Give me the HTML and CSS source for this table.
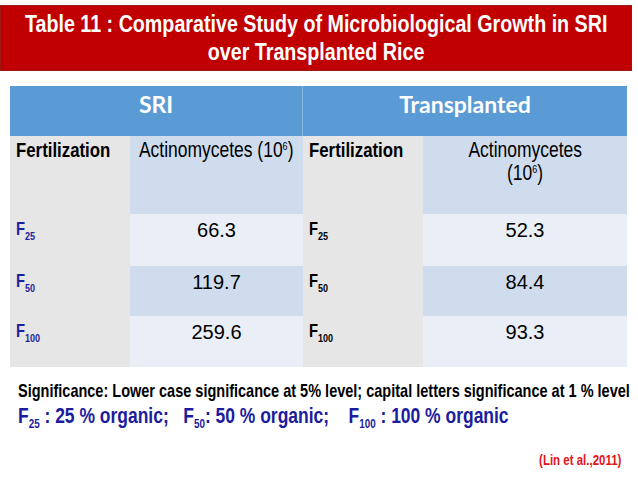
FILE: index.html
```html
<!DOCTYPE html>
<html>
<head>
<meta charset="utf-8">
<link rel="stylesheet" href="styles.css">
</head>
<body>
<div class="banner">
  <div class="title">
    <span class="n nc">Table 11 : Comparative Study of Microbiological Growth in SRI</span>
    <span class="n nc">over Transplanted Rice</span>
  </div>
</div>
<div class="table">
  <div class="hd hd-left">SRI</div>
  <div class="hd">Transplanted</div>

  <div class="c fert"><span class="n">Fertilization</span></div>
  <div class="c val sub"><span class="n nc">Actinomycetes (10<sup>6</sup>)</span></div>
  <div class="c fert"><span class="n">Fertilization</span></div>
  <div class="c val sub"><span class="n nc">Actinomycetes</span><span class="n nc">(10<sup>6</sup>)</span></div>

  <div class="c fert f blue"><span class="n">F<sub>25</sub></span></div>
  <div class="c val num light">66.3</div>
  <div class="c fert f"><span class="n">F<sub>25</sub></span></div>
  <div class="c val num light">52.3</div>

  <div class="c fert f blue"><span class="n">F<sub>50</sub></span></div>
  <div class="c val num dark">119.7</div>
  <div class="c fert f"><span class="n">F<sub>50</sub></span></div>
  <div class="c val num dark">84.4</div>

  <div class="c fert f blue"><span class="n">F<sub>100</sub></span></div>
  <div class="c val num light">259.6</div>
  <div class="c fert f"><span class="n">F<sub>100</sub></span></div>
  <div class="c val num light">93.3</div>
</div>
<div class="notes">
  <div class="sig"><span class="n">Significance: Lower case significance at 5% level; capital letters significance at 1 % level</span></div>
  <div class="legend"><span class="n">F<sub>25</sub> : 25 % organic;&nbsp;&nbsp; F<sub>50</sub>: 50 % organic;&nbsp;&nbsp;&nbsp; F<sub>100</sub> : 100 % organic</span></div>
  <div class="cite"><span class="n nr">(Lin et al.,2011)</span></div>
</div>
</body>
</html>
```

FILE: styles.css
```css
html, body {
  margin: 0;
  padding: 0;
  background: #ffffff;
}
html { overflow: hidden; }
body {
  width: 638px;
  height: 479px;
  overflow: hidden;
  font-family: "Liberation Sans", Arial, sans-serif;
}
/* Arial Narrow look: condensed Liberation Sans */
.n {
  display: inline-block;
  white-space: nowrap;
  transform: scaleX(0.82);
  transform-origin: left center;
}
.nc { transform-origin: center center; }
.nr { transform-origin: right center; }

.banner {
  margin-top: 5px;
  width: 630px;
  height: 64px;
  background: #c00000;
  border: 1px solid #9a1a10;
  display: flex;
  align-items: center;
  justify-content: center;
  overflow: hidden;
}
.title {
  width: 100%;
  display: flex;
  flex-direction: column;
  align-items: center;
  color: #ffffff;
  font-weight: bold;
  font-size: 24px;
  line-height: 28px;
}
.table {
  margin: 15px 0 0 10px;
  width: 617px;
  display: grid;
  grid-template-columns: 120px 173px 120px 204px;
  grid-template-rows: 50px 78px 52px 50px 51px;
}
.hd {
  grid-column: span 2;
  background: #5b9bd5;
  color: #ffffff;
  font-family: Lato, "Open Sans", sans-serif;
  font-weight: bold;
  font-size: 23px;
  text-align: center;
  padding-top: 4px;
}
.hd-left {
  border-right: 1px solid #86b6e2;
}
.c {
  font-size: 20.5px;
  line-height: 22px;
  color: #000000;
  padding-top: 3px;
  overflow: hidden;
  min-width: 0;
}
.fert {
  background: #e6e6e6;
  padding-left: 6px;
  font-weight: bold;
}
.val {
  display: flex;
  flex-direction: column;
  align-items: center;
}
.val.sub {
  font-size: 21.3px;
  line-height: 23px;
}
.num {
  font-size: 20px;
  line-height: 24px;
  padding-top: 4px;
}
.f {
  font-size: 18px;
  line-height: 24px;
}
.sub { background: #cfdcee; }
.light { background: #e9eef7; }
.dark { background: #cfdcee; }
.blue { color: #1f1fa0; }
sup {
  font-size: 11px;
  vertical-align: 7px;
  line-height: 0;
}
sub {
  font-size: 11px;
  vertical-align: -5px;
  line-height: 0;
}
.notes {
  padding: 14px 17px 0 18px;
  overflow: hidden;
}
.sig {
  font-weight: bold;
  font-size: 17.7px;
  line-height: 20px;
  color: #000000;
}
.legend {
  font-weight: bold;
  font-size: 21.3px;
  line-height: 26px;
  color: #1c1c9e;
  margin-top: 2px;
}
.legend sub {
  font-size: 12px;
  vertical-align: -5px;
}
.cite {
  text-align: right;
  color: #e3141a;
  font-weight: bold;
  font-size: 14px;
  line-height: 16px;
  margin-top: 23px;
}
```
